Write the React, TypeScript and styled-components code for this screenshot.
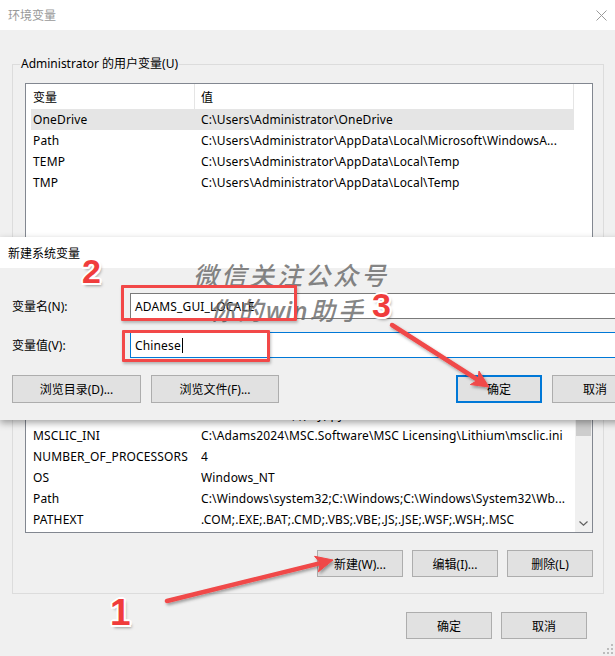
import styled, { createGlobalStyle } from "styled-components";

const GlobalStyle = createGlobalStyle`
  html, body {
    margin: 0;
    padding: 0;
    background: #f0f0f0;
  }
  body {
    font-family: "Segoe UI", "Noto Sans", "Noto Sans CJK SC", sans-serif;
    font-size: 12px;
    color: #000;
  }
  * { box-sizing: border-box; }
`;

const Screen = styled.div`
  position: relative;
  width: 615px;
  height: 656px;
  overflow: hidden;
  background: #f0f0f0;
`;

const TitleBar = styled.div<{ $h: number; $active?: boolean }>`
  height: ${(p) => p.$h}px;
  display: flex;
  align-items: center;
  justify-content: space-between;
  padding: 0 8px;
  background: #fff;
  color: ${(p) => (p.$active ? "#000" : "#999")};
  font-size: 12px;
`;

const Content = styled.div`
  padding: 26px 11px 0 12px;
  display: flex;
  flex-direction: column;
`;

const Group = styled.fieldset<{ $mt?: number }>`
  margin: ${(p) => p.$mt ?? 0}px 0 0 0;
  padding: 0 10px ${(p) => (p.$mt ? 16 : 12)}px 12px;
  border: 1px solid #dcdcdc;
  min-width: 0;
  display: flex;
  flex-direction: column;
`;

const Legend = styled.legend`
  padding: 0 1px;
  margin-left: -5px;
  line-height: 16px;
`;

const ListBox = styled.div<{ $h: number }>`
  margin-top: 11px;
  height: ${(p) => p.$h}px;
  border: 1px solid #828790;
  background: #fff;
  display: flex;
  padding-left: 5px;
  overflow: hidden;
`;

const Rows = styled.div`
  flex: 1;
  display: flex;
  flex-direction: column;
  min-width: 0;
`;

const HeaderRow = styled.div`
  height: 25px;
  display: flex;
  align-items: center;
  border-right: 1px solid #e5e5e5;
  margin-right: 1px;
  flex-shrink: 0;
`;

const HeadCell = styled.div<{ $w?: number }>`
  height: 100%;
  display: flex;
  align-items: center;
  ${(p) => (p.$w ? `width: ${p.$w}px; border-right: 1px solid #e5e5e5; padding-left: 2px;` : "flex: 1; padding-left: 6px;")}
`;

const Row = styled.div<{ $selected?: boolean }>`
  height: 21px;
  flex-shrink: 0;
  display: flex;
  align-items: center;
  margin-right: 1px;
  background: ${(p) => (p.$selected ? "#e5e5e5" : "transparent")};
  white-space: nowrap;
`;

const Cell = styled.div<{ $w?: number }>`
  ${(p) => (p.$w ? `width: ${p.$w}px; padding-left: 2px;` : "flex: 1;")}
  overflow: hidden;
  letter-spacing: 0.15px;
`;

const ScrollCol = styled.div<{ $track?: boolean }>`
  width: 17px;
  flex-shrink: 0;
  background: ${(p) => (p.$track ? "#f0f0f0" : "#fff")};
  display: flex;
  flex-direction: column;
`;

const ScrollArrow = styled.div`
  height: 17px;
  display: flex;
  align-items: center;
  justify-content: center;
`;

const Track = styled.div`
  flex: 1;
  padding: 0 1px;
`;

const Thumb = styled.div`
  margin-top: 37px;
  height: 66px;
  background: #cdcdcd;
`;

const ButtonRow = styled.div<{ $mt: number; $pr?: number }>`
  margin-top: ${(p) => p.$mt}px;
  padding-right: ${(p) => p.$pr ?? 0}px;
  display: flex;
  justify-content: flex-end;
  gap: 9px;
`;

const Button = styled.button<{ $w?: number; $h?: number; $focus?: boolean }>`
  width: ${(p) => p.$w ?? 86}px;
  height: ${(p) => p.$h ?? 27}px;
  background: #e1e1e1;
  border: ${(p) => (p.$focus ? "2px solid #0078d7" : "1px solid #adadad")};
  font: inherit;
  color: #000;
  padding: 0;
  flex-shrink: 0;
`;

const Grip = styled.svg`
  position: absolute;
  right: 1px;
  bottom: 1px;
`;

/* ---------- overlay dialog ---------- */

const Dialog = styled.div`
  position: absolute;
  left: 0;
  top: 237px;
  width: 650px;
  height: 183px;
  background: #f0f0f0;
  box-shadow: 0 3px 7px rgba(0, 0, 0, 0.35);
  display: flex;
  flex-direction: column;
`;

const DialogBody = styled.div`
  padding: 25px 12px 0 12px;
  display: flex;
  flex-direction: column;
`;

const FieldGrid = styled.div`
  display: grid;
  grid-template-columns: 118px 1fr;
  row-gap: 13px;
  align-items: center;
`;

const Field = styled.div<{ $focus?: boolean }>`
  height: 26px;
  background: #fff;
  border: 1px solid ${(p) => (p.$focus ? "#0078d7" : "#7a7a7a")};
  padding-left: 4px;
  display: flex;
  align-items: center;
  letter-spacing: 0.15px;
`;

const Caret = styled.span`
  display: inline-block;
  width: 1px;
  height: 15px;
  margin-left: 1px;
  background: #000;
`;

const DialogButtons = styled.div`
  margin-top: 17px;
  display: flex;
  gap: 10px;
`;

const Spacer = styled.div`
  flex: 1;
`;

/* ---------- annotations ---------- */

const Annotations = styled.div`
  position: absolute;
  inset: 0;
  pointer-events: none;
`;

const RedBox = styled.div<{ $x: number; $y: number; $w: number; $h: number }>`
  position: absolute;
  left: ${(p) => p.$x}px;
  top: ${(p) => p.$y}px;
  width: ${(p) => p.$w}px;
  height: ${(p) => p.$h}px;
  border: 3px solid #f24848;
  border-radius: 1px;
  box-shadow: 1px 2px 3px rgba(0, 0, 0, 0.25);
`;

const StepNo = styled.div<{ $x: number; $y: number; $size?: number }>`
  position: absolute;
  left: ${(p) => p.$x}px;
  top: ${(p) => p.$y}px;
  font-family: "Liberation Sans", Arial, sans-serif;
  font-weight: 700;
  font-size: ${(p) => p.$size ?? 34}px;
  line-height: 1;
  color: #f03c3c;
  text-shadow: 2px 0 0 #fff, -2px 0 0 #fff, 0 2px 0 #fff, 0 -2px 0 #fff,
    1.5px 1.5px 0 #fff, -1.5px -1.5px 0 #fff, 1.5px -1.5px 0 #fff,
    -1.5px 1.5px 0 #fff, 2px 3px 3px rgba(0, 0, 0, 0.35);
`;

const Watermark = styled.div`
  position: absolute;
  left: 193px;
  top: 257px;
  font-family: "Noto Sans CJK SC", sans-serif;
  font-style: italic;
  font-weight: 500;
  font-size: 25px;
  line-height: 35px;
  letter-spacing: 3px;
  color: rgba(105, 105, 105, 0.82);
  white-space: nowrap;
`;

const WatermarkLine = styled.div<{ $indent?: number }>`
  margin-left: ${(p) => p.$indent ?? 0}px;
`;

const Latin = styled.span`
  font-family: "Open Sans", "Noto Sans", sans-serif;
  font-weight: 600;
  letter-spacing: 0.5px;
  margin-right: 2px;
`;

const ArrowLayer = styled.svg`
  position: absolute;
  inset: 0;
`;

const userVars = [
  ["OneDrive", "C:\\Users\\Administrator\\OneDrive"],
  ["Path", "C:\\Users\\Administrator\\AppData\\Local\\Microsoft\\WindowsA..."],
  ["TEMP", "C:\\Users\\Administrator\\AppData\\Local\\Temp"],
  ["TMP", "C:\\Users\\Administrator\\AppData\\Local\\Temp"],
];

const systemVars = [
  ["ComSpec", "C:\\Windows\\system32\\cmd.exe"],
  ["DriverData", "C:\\Windows\\System32\\Drivers\\DriverData"],
  ["JAVA_HOME", "C:\\Program Files\\Java\\jdk"],
  ["MSCDIR", "C:\\Adams2024\\.,.,(My).py"],
  ["MSCLIC_INI", "C:\\Adams2024\\MSC.Software\\MSC Licensing\\Lithium\\msclic.ini"],
  ["NUMBER_OF_PROCESSORS", "4"],
  ["OS", "Windows_NT"],
  ["Path", "C:\\Windows\\system32;C:\\Windows;C:\\Windows\\System32\\Wb..."],
  ["PATHEXT", ".COM;.EXE;.BAT;.CMD;.VBS;.VBE;.JS;.JSE;.WSF;.WSH;.MSC"],
];

const Arrow = ({ x1, y1, x2, y2 }: { x1: number; y1: number; x2: number; y2: number }) => {
  const dx = x2 - x1;
  const dy = y2 - y1;
  const len = Math.hypot(dx, dy);
  const ux = dx / len;
  const uy = dy / len;
  const px = -uy;
  const py = ux;
  const head = 17;
  const half = 8;
  const bx = x2 - ux * head;
  const by = y2 - uy * head;
  const nx = x2 - ux * (head - 4);
  const ny = y2 - uy * (head - 4);
  const pts = [
    [x2, y2],
    [bx + px * half, by + py * half],
    [nx, ny],
    [bx - px * half, by - py * half],
  ]
    .map((p) => p.join(","))
    .join(" ");
  return (
    <g filter="url(#shadow)">
      <line x1={x1} y1={y1} x2={nx} y2={ny} stroke="#f04848" strokeWidth={4.5} strokeLinecap="round" />
      <polygon points={pts} fill="#f04848" stroke="#f04848" strokeWidth={1} strokeLinejoin="round" />
    </g>
  );
};

const VarList = ({
  height,
  rows,
  selected,
  scroll,
}: {
  height: number;
  rows: string[][];
  selected?: number;
  scroll?: boolean;
}) => (
  <ListBox $h={height}>
    <Rows>
      <HeaderRow>
        <HeadCell $w={164}>变量</HeadCell>
        <HeadCell>值</HeadCell>
      </HeaderRow>
      {rows.map(([name, value], i) => (
        <Row key={name + i} $selected={i === selected}>
          <Cell $w={170}>{name}</Cell>
          <Cell>{value}</Cell>
        </Row>
      ))}
    </Rows>
    {scroll ? (
      <ScrollCol $track>
        <ScrollArrow>
          <svg width="9" height="5" viewBox="0 0 9 5">
            <path d="M0.5 4.5 L4.5 0.8 L8.5 4.5" fill="none" stroke="#606060" strokeWidth="1.2" />
          </svg>
        </ScrollArrow>
        <Track>
          <Thumb />
        </Track>
        <ScrollArrow>
          <svg width="9" height="5" viewBox="0 0 9 5">
            <path d="M0.5 0.5 L4.5 4.2 L8.5 0.5" fill="none" stroke="#606060" strokeWidth="1.2" />
          </svg>
        </ScrollArrow>
      </ScrollCol>
    ) : (
      <ScrollCol />
    )}
  </ListBox>
);

export default function App() {
  return (
    <Screen>
      <GlobalStyle />
      <TitleBar $h={30}>
        <span>环境变量</span>
        <svg width="11" height="11" viewBox="0 0 11 11">
          <path d="M0.5 0.5 L10.5 10.5 M10.5 0.5 L0.5 10.5" stroke="#9a9a9a" strokeWidth="1" />
        </svg>
      </TitleBar>
      <Content>
        <Group>
          <Legend>Administrator 的用户变量(U)</Legend>
          <VarList height={180} rows={userVars} selected={0} />
        </Group>
        <Group $mt={12}>
          <Legend>系统变量(S)</Legend>
          <VarList height={218} rows={systemVars} scroll />
          <ButtonRow $mt={17}>
            <Button>新建(W)...</Button>
            <Button>编辑(I)...</Button>
            <Button>删除(L)</Button>
          </ButtonRow>
        </Group>
        <ButtonRow $mt={18} $pr={17}>
          <Button>确定</Button>
          <Button>取消</Button>
        </ButtonRow>
      </Content>
      <Grip width="12" height="12" viewBox="0 0 12 12">
        {[
          [9, 1],
          [5, 5],
          [9, 5],
          [1, 9],
          [5, 9],
          [9, 9],
        ].map(([x, y]) => (
          <rect key={`${x}-${y}`} x={x} y={y} width="2" height="2" fill="#bcbcbc" />
        ))}
      </Grip>

      <Dialog>
        <TitleBar $h={31} $active>
          <span>新建系统变量</span>
        </TitleBar>
        <DialogBody>
          <FieldGrid>
            <span>变量名(N):</span>
            <Field>ADAMS_GUI_LOCALE</Field>
            <span>变量值(V):</span>
            <Field $focus>
              Chinese
              <Caret />
            </Field>
          </FieldGrid>
          <DialogButtons>
            <Button $w={129} $h={28}>浏览目录(D)...</Button>
            <Button $w={128} $h={28}>浏览文件(F)...</Button>
            <Spacer />
            <Button $w={86} $h={28} $focus>确定</Button>
            <Button $w={86} $h={28}>取消</Button>
          </DialogButtons>
        </DialogBody>
      </Dialog>

      <Annotations>
        <Watermark>
          <WatermarkLine>微信关注公众号</WatermarkLine>
          <WatermarkLine $indent={17}>
            你的<Latin>win</Latin>助手
          </WatermarkLine>
        </Watermark>
        <RedBox $x={121} $y={285} $w={176} $h={36} />
        <RedBox $x={122} $y={330} $w={148} $h={32} />
        <ArrowLayer width="615" height="656" viewBox="0 0 615 656">
          <defs>
            <filter id="shadow" x="-20%" y="-20%" width="140%" height="140%">
              <feDropShadow dx="1.5" dy="2" stdDeviation="1.5" floodColor="#000" floodOpacity="0.35" />
            </filter>
          </defs>
          <Arrow x1={392} y1={325} x2={489} y2={387} />
          <Arrow x1={167} y1={601} x2={333} y2={560} />
        </ArrowLayer>
        <StepNo $x={82} $y={254}>2</StepNo>
        <StepNo $x={372} $y={288}>3</StepNo>
        <StepNo $x={110} $y={594} $size={37}>1</StepNo>
      </Annotations>
    </Screen>
  );
}
